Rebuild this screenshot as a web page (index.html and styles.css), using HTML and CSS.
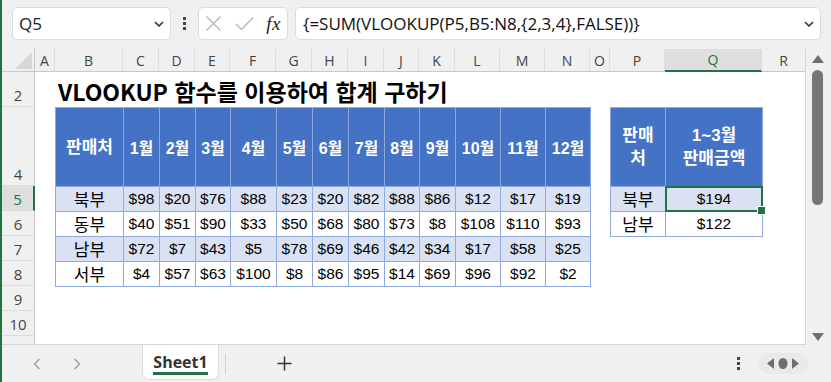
FILE: index.html
```html
<!DOCTYPE html>
<html lang="ko">
  <head>
    <meta charset="UTF-8" />
    <meta name="viewport" content="width=device-width, initial-scale=1.0" />
    <title>Sheet1</title>
    <link rel="stylesheet" href="styles.css">
  </head>
  <body>
    <div class="app">
      <div class="formula-bar">
        <div class="name-box">
          <span>Q5</span>
          <svg width="10" height="6" viewBox="0 0 10 6"><path d="M1 1l4 4 4-4" fill="none" stroke="#333" stroke-width="1.6" /></svg>
        </div>
        <div class="kebab"><i></i><i></i><i></i></div>
        <div class="fx-box">
          <svg width="17" height="17" viewBox="0 0 17 17"><path d="M1.5 1.5l14 14M15.5 1.5l-14 14" fill="none" stroke="#b4b4b4" stroke-width="1.3" /></svg>
          <svg width="19" height="15" viewBox="0 0 19 15"><path d="M1 8l5.5 5.5L18 1.5" fill="none" stroke="#b4b4b4" stroke-width="1.3" /></svg>
          <span class="fx">fx</span>
        </div>
        <div class="formula">
          <span>{=SUM(VLOOKUP(P5,B5:N8,{2,3,4},FALSE))}</span>
          <svg width="10" height="6" viewBox="0 0 10 6"><path d="M1 1l4 4 4-4" fill="none" stroke="#333" stroke-width="1.6" /></svg>
        </div>
      </div>

      <div class="main">
        <div class="sheet">
          <div class="corner"><svg width="17" height="17" viewBox="0 0 17 17"><path d="M17 0V17H0Z" fill="#d6d6d6" /></svg></div>
          <div class="col-head">A</div>
          <div class="col-head">B</div>
          <div class="col-head">C</div>
          <div class="col-head">D</div>
          <div class="col-head">E</div>
          <div class="col-head">F</div>
          <div class="col-head">G</div>
          <div class="col-head">H</div>
          <div class="col-head">I</div>
          <div class="col-head">J</div>
          <div class="col-head">K</div>
          <div class="col-head">L</div>
          <div class="col-head">M</div>
          <div class="col-head">N</div>
          <div class="col-head">O</div>
          <div class="col-head">P</div>
          <div class="col-head active">Q</div>
          <div class="col-head">R</div>

          <div class="row-head">2</div>
          <div class="row-head">4</div>
          <div class="row-head active">5</div>
          <div class="row-head">6</div>
          <div class="row-head">7</div>
          <div class="row-head">8</div>
          <div class="row-head">9</div>
          <div class="row-head">10</div>
          <div class="row-head"></div>

          <div class="title">VLOOKUP 함수를 이용하여 합계 구하기</div>

          <table class="data sales">
            <colgroup>
              <col style="width: 68px" /><col style="width: 36px" /><col style="width: 36px" /><col style="width: 35px" />
              <col style="width: 46px" /><col style="width: 36px" /><col style="width: 36px" /><col style="width: 36px" />
              <col style="width: 35px" /><col style="width: 36px" /><col style="width: 45px" /><col style="width: 45px" />
              <col style="width: 45px" />
            </colgroup>
            <tr class="head">
              <th class="ko">판매처</th><th>1월</th><th>2월</th><th>3월</th><th>4월</th><th>5월</th><th>6월</th>
              <th>7월</th><th>8월</th><th>9월</th><th>10월</th><th>11월</th><th>12월</th>
            </tr>
            <tr class="band">
              <td class="ko">북부</td><td>$98</td><td>$20</td><td>$76</td><td>$88</td><td>$23</td><td>$20</td>
              <td>$82</td><td>$88</td><td>$86</td><td>$12</td><td>$17</td><td>$19</td>
            </tr>
            <tr>
              <td class="ko">동부</td><td>$40</td><td>$51</td><td>$90</td><td>$33</td><td>$50</td><td>$68</td>
              <td>$80</td><td>$73</td><td>$8</td><td>$108</td><td>$110</td><td>$93</td>
            </tr>
            <tr class="band">
              <td class="ko">남부</td><td>$72</td><td>$7</td><td>$43</td><td>$5</td><td>$78</td><td>$69</td>
              <td>$46</td><td>$42</td><td>$34</td><td>$17</td><td>$58</td><td>$25</td>
            </tr>
            <tr>
              <td class="ko">서부</td><td>$4</td><td>$57</td><td>$63</td><td>$100</td><td>$8</td><td>$86</td>
              <td>$95</td><td>$14</td><td>$69</td><td>$96</td><td>$92</td><td>$2</td>
            </tr>
          </table>

          <table class="data summary">
            <colgroup><col style="width: 55px" /><col style="width: 97px" /></colgroup>
            <tr class="head">
              <th class="ko">판매<br />처</th>
              <th class="ko">1~3월<br />판매금액</th>
            </tr>
            <tr class="band">
              <td class="ko">북부</td><td class="selected">$194</td>
            </tr>
            <tr>
              <td class="ko">남부</td><td>$122</td>
            </tr>
          </table>
        </div>

        <div class="vscroll">
          <svg width="12" height="8" viewBox="0 0 12 8"><path d="M6 0L12 8H0Z" fill="#6e6e6e" /></svg>
          <div class="thumb"></div>
          <svg class="down" width="12" height="8" viewBox="0 0 12 8"><path d="M0 0H12L6 8Z" fill="#6e6e6e" /></svg>
        </div>
      </div>

      <div class="tabbar">
        <div class="sheet-nav">
          <svg width="8" height="12" viewBox="0 0 8 12"><path d="M6.5 1L1.5 6l5 5" fill="none" stroke="#9a9a9a" stroke-width="1.3" /></svg>
          <svg width="8" height="12" viewBox="0 0 8 12"><path d="M1.5 1l5 5-5 5" fill="none" stroke="#9a9a9a" stroke-width="1.3" /></svg>
        </div>
        <div class="tab"><span>Sheet1</span></div>
        <div class="tab-sep"></div>
        <div class="add">
          <svg width="15" height="15" viewBox="0 0 15 15"><path d="M7.5 0.5v14M0.5 7.5h14" fill="none" stroke="#333" stroke-width="1.5" /></svg>
        </div>
        <div class="kebab small"><i></i><i></i><i></i></div>
        <div class="hnav">
          <svg width="7" height="11" viewBox="0 0 7 11"><path d="M7 0V11L0 5.5Z" fill="#6e6e6e" /></svg>
          <svg width="10" height="11" viewBox="0 0 10 11"><ellipse cx="5" cy="5.5" rx="4.5" ry="5.5" fill="#6e6e6e" /></svg>
          <svg width="7" height="11" viewBox="0 0 7 11"><path d="M0 0V11L7 5.5Z" fill="#6e6e6e" /></svg>
        </div>
      </div>
    </div>
  </body>
</html>
```

FILE: styles.css
```css
* {
  box-sizing: border-box;
}
html,
body {
  margin: 0;
}
body {
  width: 831px;
  height: 382px;
  overflow: hidden;
  background: #f0f0f0;
  font-family: "Open Sans", "Noto Sans CJK KR", sans-serif;
  color: #222;
}
.app {
  height: 382px;
  border-left: 2px solid #217346;
  display: flex;
  flex-direction: column;
}

/* formula bar */
.formula-bar {
  height: 49px;
  flex: none;
  display: flex;
  align-items: flex-start;
  padding: 7px 10px 0 10px;
}
.name-box,
.fx-box,
.formula {
  height: 33px;
  background: #fff;
  border: 1px solid #dcdcdc;
  border-radius: 5px;
  display: flex;
  align-items: center;
}
.name-box {
  width: 159px;
  padding: 0 6px 0 6px;
  justify-content: space-between;
  font-size: 17px;
}
.kebab {
  width: 27px;
  height: 33px;
  display: flex;
  flex-direction: column;
  align-items: center;
  justify-content: center;
  gap: 2px;
}
.kebab i {
  display: block;
  width: 3px;
  height: 3px;
  background: #444;
}
.fx-box {
  width: 90px;
  padding: 0 6px 0 6px;
  justify-content: space-between;
}
.fx {
  font-family: "Liberation Serif", serif;
  font-style: italic;
  font-size: 19px;
  color: #222;
  letter-spacing: 0.5px;
}
.formula {
  flex: 1;
  margin-left: 7px;
  padding: 0 6px 0 7px;
  justify-content: space-between;
  font-size: 17px;
  color: #111;
}

/* grid */
.main {
  height: 296px;
  flex: none;
  display: flex;
}
.sheet {
  width: 804px;
  height: 296px;
  overflow: hidden;
  background: #fff;
  border-right: 1px solid #d6d6d6;
  border-bottom: 1px solid #d6d6d6;
  display: grid;
  grid-template-columns: 33px 20px 68px 36px 36px 35px 46px 36px 36px 36px 35px 36px 45px 45px 45px 20px 55px 97px 44px;
  grid-template-rows: 23px 35px 79px repeat(7, 25px);
  font-family: "Liberation Sans", "Noto Sans CJK KR", sans-serif;
}
.corner {
  background: #f0f0f0;
  border-right: 1px solid #c8c8c8;
  border-bottom: 1px solid #c8c8c8;
  display: flex;
  align-items: flex-end;
  justify-content: flex-end;
  padding: 0 2px 2px 0;
}
.col-head {
  background: #f0f0f0;
  border-right: 1px solid #dcdcdc;
  border-bottom: 1px solid #c8c8c8;
  font-family: "Open Sans", sans-serif;
  font-size: 14px;
  color: #444;
  display: flex;
  align-items: center;
  justify-content: center;
}
.col-head.active {
  background: #dedede;
  color: #217346;
  border-bottom: 2px solid #217346;
}
.row-head {
  grid-column: 1;
  background: #f0f0f0;
  border-right: 1px solid #c8c8c8;
  border-bottom: 1px solid #dcdcdc;
  font-family: "Open Sans", sans-serif;
  font-size: 15px;
  line-height: 20px;
  color: #444;
  display: flex;
  align-items: flex-end;
  justify-content: center;
  padding-bottom: 1px;
}
.row-head.active {
  background: #dedede;
  color: #217346;
  border-right: 2px solid #217346;
}
.title {
  grid-column: 3 / 16;
  grid-row: 2;
  align-self: center;
  padding: 2px 0 0 3px;
  font-family: "Noto Sans CJK KR", sans-serif;
  font-weight: 700;
  font-size: 23px;
  line-height: 28px;
  color: #000;
  white-space: nowrap;
}

/* tables */
.data {
  border-collapse: collapse;
  table-layout: fixed;
  width: 100%;
  align-self: start;
}
.sales {
  grid-column: 3 / 16;
  grid-row: 3 / 8;
}
.summary {
  grid-column: 17 / 19;
  grid-row: 3 / 6;
}
.data th,
.data td {
  border: 1px solid #8ea9db;
  padding: 0;
  text-align: center;
  white-space: nowrap;
}
.data tr.head {
  height: 79px;
}
.data tr {
  height: 25px;
}
.data th {
  background: #4472c4;
  color: #fff;
  font-weight: 700;
  font-size: 16px;
}
.data th.ko {
  font-size: 17px;
  line-height: 23px;
}
.data td {
  font-size: 15.5px;
  color: #000;
  line-height: 22px;
}
.data td.ko {
  font-family: "Noto Sans CJK KR", sans-serif;
  font-size: 17px;
}
.data tr.band td {
  background: #d9e1f2;
}
.data td.selected {
  position: relative;
}
.data td.selected::after {
  content: "";
  position: absolute;
  left: -1px;
  top: -1px;
  right: -1px;
  bottom: -1px;
  border: 2px solid #217346;
}
.data td.selected::before {
  content: "";
  position: absolute;
  right: -4px;
  bottom: -4px;
  width: 7px;
  height: 7px;
  background: #217346;
  border: 1px solid #fff;
  z-index: 1;
}

/* vertical scrollbar */
.vscroll {
  width: 25px;
  display: flex;
  flex-direction: column;
  align-items: center;
  padding: 6px 2px 4px 0;
}
.thumb {
  width: 11px;
  height: 135px;
  margin-top: 7px;
  border-radius: 6px;
  background: #767676;
}
.vscroll .down {
  margin-top: auto;
}

/* sheet tabs */
.tabbar {
  flex: 1;
  display: flex;
  align-items: center;
}
.sheet-nav {
  display: flex;
  margin-left: 31px;
  gap: 32px;
}
.tab {
  align-self: flex-start;
  margin-left: 61px;
  width: 77px;
  height: 35px;
  background: #fff;
  border: 1px solid #dcdcdc;
  border-top: none;
  border-radius: 0 0 7px 7px;
  display: flex;
  align-items: center;
  justify-content: center;
}
.tab span {
  font-family: "Open Sans", sans-serif;
  font-weight: 700;
  font-size: 16px;
  line-height: 20px;
  color: #333;
  border-bottom: 3px solid #217346;
  padding-top: 2px;
}
.tab-sep {
  width: 1px;
  height: 20px;
  margin-left: 6px;
  background: #cfcfcf;
}
.add {
  margin-left: 51px;
  display: flex;
}
.kebab.small {
  margin-left: auto;
  width: 10px;
  height: 16px;
}
.hnav {
  margin: 0 23px 0 15px;
  width: 50px;
  height: 21px;
  border-radius: 11px;
  background: #e9e9e9;
  display: flex;
  align-items: center;
  justify-content: center;
  gap: 4px;
}
```
